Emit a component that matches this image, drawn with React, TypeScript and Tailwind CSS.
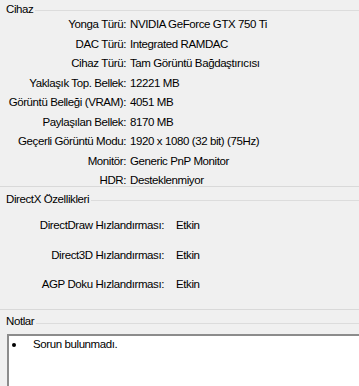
export default function App() {
  const device: [string, string][] = [
    ['Yonga Türü:', 'NVIDIA GeForce GTX 750 Ti'],
    ['DAC Türü:', 'Integrated RAMDAC'],
    ['Cihaz Türü:', 'Tam Görüntü Bağdaştırıcısı'],
    ['Yaklaşık Top. Bellek:', '12221 MB'],
    ['Görüntü Belleği (VRAM):', '4051 MB'],
    ['Paylaşılan Bellek:', '8170 MB'],
    ['Geçerli Görüntü Modu:', '1920 x 1080 (32 bit) (75Hz)'],
    ['Monitör:', 'Generic PnP Monitor'],
    ['HDR:', 'Desteklenmiyor'],
  ]
  const dx: [string, string][] = [
    ['DirectDraw Hızlandırması:', 'Etkin'],
    ['Direct3D Hızlandırması:', 'Etkin'],
    ['AGP Doku Hızlandırması:', 'Etkin'],
  ]

  return (
    <div className="w-[359px] h-[386px] overflow-hidden bg-[#f0f0f0] text-[11.5px] tracking-[-0.4px] text-black font-['Liberation_Sans',Arial,sans-serif]">
      {/* Cihaz */}
      <div className="flex items-center h-[20px]">
        <span className="pl-[6px] pr-[2px] leading-none">Cihaz</span>
        <div className="flex-1 h-px bg-[#dcdcdc]" />
      </div>
      <div className="-mt-[5px] h-[172px] overflow-hidden border-b border-[#d9d9d9]">
        {device.map(([k, v]) => (
          <div key={k} className="grid grid-cols-[126px_1fr] gap-[4px] leading-[19.5px] whitespace-nowrap">
            <span className="text-right">{k}</span>
            <span>{v}</span>
          </div>
        ))}
      </div>

      {/* DirectX */}
      <div className="mt-[2px] flex items-center h-[22px]">
        <span className="pl-[6px] pr-[2px] leading-none">DirectX Özellikleri</span>
        <div className="flex-1 h-px bg-[#dcdcdc]" />
      </div>
      <div className="h-[99px] border-b border-[#d9d9d9]">
        {dx.map(([k, v]) => (
          <div key={k} className="grid grid-cols-[164px_1fr] gap-[12px] leading-[29.5px] whitespace-nowrap">
            <span className="text-right">{k}</span>
            <span>{v}</span>
          </div>
        ))}
      </div>

      {/* Notlar */}
      <div className="flex items-center h-[24px]">
        <span className="pl-[6px] pr-[2px] leading-none">Notlar</span>
        <div className="flex-1 h-px mt-[2px] bg-[#dcdcdc]" />
      </div>
      <div className="ml-[7px] h-[60px] bg-white border-t-2 border-l-2 border-[#8c8c8c]">
        <div className="grid grid-cols-[21px_1fr] items-center h-[18px] pl-[3px]">
          <div className="w-[4px] h-[4px] rounded-full bg-black" />
          <div>Sorun bulunmadı.</div>
        </div>
      </div>
    </div>
  )
}
